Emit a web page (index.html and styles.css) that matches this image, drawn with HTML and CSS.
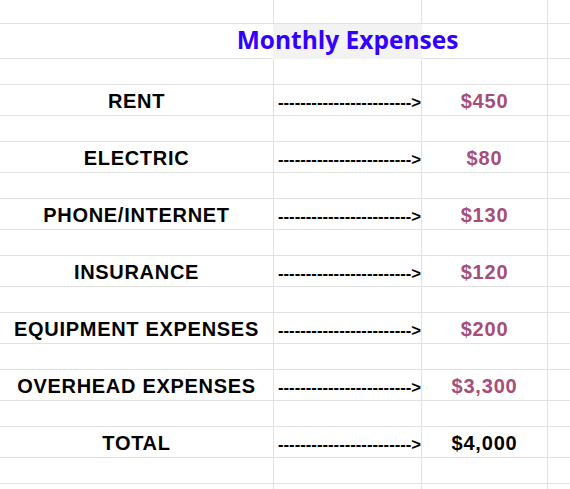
FILE: index.html
```html
<!DOCTYPE html>
<html>
<head>
<meta charset="utf-8">
<link rel="stylesheet" href="styles.css">
</head>
<body>
<div class="sheet">
  <div class="cell"></div><div class="cell"></div><div class="cell"></div><div class="cell"></div>

  <div class="cell title-row">
    <div class="title-side"></div>
    <div class="title-cell"><span class="title">Monthly Expenses</span></div>
    <div class="title-side"></div>
  </div>
  <div class="cell"></div>

  <div class="cell"></div><div class="cell"></div><div class="cell"></div><div class="cell"></div>
  <div class="cell label">RENT</div><div class="cell dash">------------------------&gt;</div><div class="cell amount">$450</div><div class="cell"></div>
  <div class="cell"></div><div class="cell"></div><div class="cell"></div><div class="cell"></div>
  <div class="cell label">ELECTRIC</div><div class="cell dash">------------------------&gt;</div><div class="cell amount">$80</div><div class="cell"></div>
  <div class="cell"></div><div class="cell"></div><div class="cell"></div><div class="cell"></div>
  <div class="cell label">PHONE/INTERNET</div><div class="cell dash">------------------------&gt;</div><div class="cell amount">$130</div><div class="cell"></div>
  <div class="cell"></div><div class="cell"></div><div class="cell"></div><div class="cell"></div>
  <div class="cell label">INSURANCE</div><div class="cell dash">------------------------&gt;</div><div class="cell amount">$120</div><div class="cell"></div>
  <div class="cell"></div><div class="cell"></div><div class="cell"></div><div class="cell"></div>
  <div class="cell label">EQUIPMENT EXPENSES</div><div class="cell dash">------------------------&gt;</div><div class="cell amount">$200</div><div class="cell"></div>
  <div class="cell"></div><div class="cell"></div><div class="cell"></div><div class="cell"></div>
  <div class="cell label">OVERHEAD EXPENSES</div><div class="cell dash">------------------------&gt;</div><div class="cell amount">$3,300</div><div class="cell"></div>
  <div class="cell"></div><div class="cell"></div><div class="cell"></div><div class="cell"></div>
  <div class="cell label">TOTAL</div><div class="cell dash">------------------------&gt;</div><div class="cell amount total">$4,000</div><div class="cell"></div>
  <div class="cell"></div><div class="cell"></div><div class="cell"></div><div class="cell"></div>
  <div class="cell"></div><div class="cell"></div><div class="cell"></div><div class="cell"></div>
</div>
</body>
</html>
```

FILE: styles.css
```css
html, body {
  margin: 0;
  padding: 0;
  background: #ffffff;
  overflow: hidden;
}

.sheet {
  display: grid;
  grid-template-columns: 273px 147px 125px 1fr;
  grid-template-rows: 23px 34px repeat(7, 25px 30px) 25px 20px;
  gap: 1px;
  background: #e2e2e2;
  width: 570px;
  height: 489px;
  overflow: hidden;
  font-family: "Liberation Sans", Arial, sans-serif;
}

.cell {
  background: #ffffff;
  display: flex;
  align-items: flex-end;
  min-width: 0;
  white-space: nowrap;
}

.title-row {
  grid-column: 1 / 4;
  display: grid;
  grid-template-columns: 273px 149px 1fr;
}

.title-cell {
  background: #f3f3f3;
  display: flex;
  justify-content: center;
  align-items: flex-end;
  overflow: visible;
  padding-bottom: 3px;
}

.title {
  font-family: "Open Sans", "Noto Sans", sans-serif;
  font-weight: 700;
  font-size: 24.5px;
  line-height: 32px;
  color: #3300ff;
}

.label {
  justify-content: center;
  font-weight: 700;
  font-size: 20px;
  letter-spacing: 0.7px;
  line-height: 23px;
  padding-bottom: 2px;
  color: #000000;
}

.dash {
  padding: 0 0 1px 4px;
  font-size: 16.7px;
  font-weight: 700;
  line-height: 23px;
  color: #000000;
}

.amount {
  justify-content: center;
  font-weight: 700;
  font-size: 20px;
  letter-spacing: 0.8px;
  line-height: 23px;
  padding-bottom: 2px;
  color: #a64d79;
}

.amount.total {
  color: #000000;
}
```
